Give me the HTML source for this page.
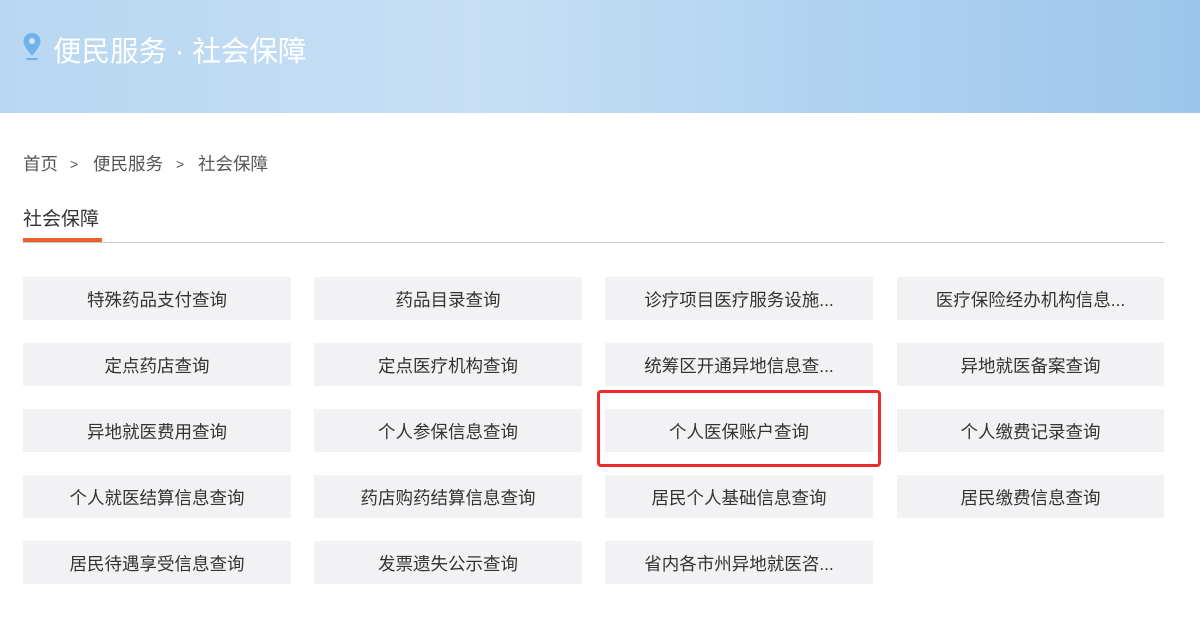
<!DOCTYPE html>
<html><head><meta charset="utf-8"><style>
*{margin:0;padding:0;box-sizing:border-box}
body{width:1200px;height:622px;background:#fff;font-family:"Liberation Sans","Noto Sans CJK SC",sans-serif;position:relative;overflow:hidden}
.hd{position:absolute;left:0;top:0;width:1200px;height:113px;background:linear-gradient(90deg,#b9d7f2 0%,#c6dff4 40%,#b0d2f0 70%,#9cc6ec 100%)}
.hd .t{position:absolute;left:53px;top:33px;font-size:28.5px;color:#fff;line-height:38px}
.bc{position:absolute;left:23px;top:152px;font-size:17.5px;color:#555;line-height:24px;white-space:nowrap}
.bc span{position:absolute;top:0}
.h2{position:absolute;left:23px;top:207px;font-size:19px;color:#333;line-height:26px}
.ul{position:absolute;left:23px;top:238px;width:79px;height:4px;background:#f0602a}
.ln{position:absolute;left:23px;top:242px;width:1141px;height:1px;background:#c8c8c8}
.b{position:absolute;width:268px;height:43px;background:#f2f2f4;font-size:17.5px;color:#333;text-align:center;line-height:47px}
.red{position:absolute;left:597px;top:390px;width:284px;height:77px;border:3px solid #ee2b2b;border-radius:4px}
</style></head><body>
<div class="hd">
<svg style="position:absolute;left:22px;top:32px" width="20" height="30" viewBox="0 0 20 30"><path d="M10 1C5 1 1.5 4.6 1.5 9.3c0 5.5 8.5 14.5 8.5 14.5s8.5-9 8.5-14.5C18.5 4.6 15 1 10 1z" fill="#6fb2ee"/><circle cx="10" cy="9" r="3" fill="#cfe4f6"/><rect x="4" y="26" width="12" height="2" rx="1" fill="#6fb2ee"/></svg>
<div class="t">便民服务 · 社会保障</div>
</div>
<div class="bc"><span style="left:0">首页</span><span style="left:47px;font-size:14px">&gt;</span><span style="left:70px">便民服务</span><span style="left:153px;font-size:14px">&gt;</span><span style="left:175px">社会保障</span></div>
<div class="h2">社会保障</div>
<div class="ul"></div><div class="ln"></div>
<div class="b" style="left:23px;top:277px">特殊药品支付查询</div>
<div class="b" style="left:314px;top:277px">药品目录查询</div>
<div class="b" style="left:605px;top:277px">诊疗项目医疗服务设施...</div>
<div class="b" style="left:897px;top:277px;width:267px">医疗保险经办机构信息...</div>
<div class="b" style="left:23px;top:343px">定点药店查询</div>
<div class="b" style="left:314px;top:343px">定点医疗机构查询</div>
<div class="b" style="left:605px;top:343px">统筹区开通异地信息查...</div>
<div class="b" style="left:897px;top:343px;width:267px">异地就医备案查询</div>
<div class="b" style="left:23px;top:409px">异地就医费用查询</div>
<div class="b" style="left:314px;top:409px">个人参保信息查询</div>
<div class="b" style="left:605px;top:409px">个人医保账户查询</div>
<div class="b" style="left:897px;top:409px;width:267px">个人缴费记录查询</div>
<div class="b" style="left:23px;top:475px">个人就医结算信息查询</div>
<div class="b" style="left:314px;top:475px">药店购药结算信息查询</div>
<div class="b" style="left:605px;top:475px">居民个人基础信息查询</div>
<div class="b" style="left:897px;top:475px;width:267px">居民缴费信息查询</div>
<div class="b" style="left:23px;top:541px">居民待遇享受信息查询</div>
<div class="b" style="left:314px;top:541px">发票遗失公示查询</div>
<div class="b" style="left:605px;top:541px">省内各市州异地就医咨...</div>
<div class="red"></div>
</body></html>
